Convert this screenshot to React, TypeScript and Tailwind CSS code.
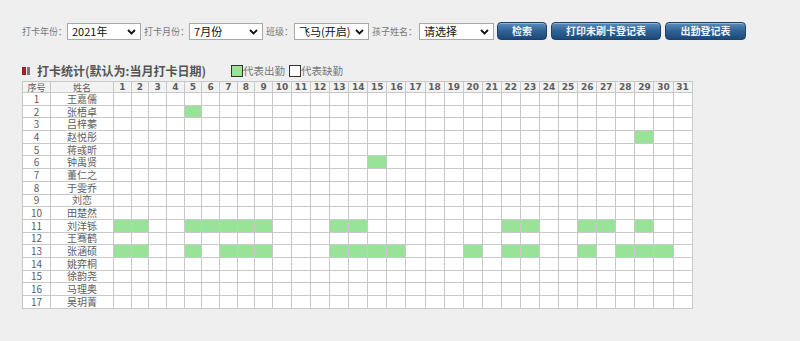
import React from "react";

const students = [
  "王嘉儒",
  "张梧卓",
  "吕梓蓁",
  "赵悦彤",
  "蒋彧昕",
  "钟禹贤",
  "董仁之",
  "于雯乔",
  "刘恋",
  "田楚然",
  "刘洋铄",
  "王骞鹤",
  "张涵硕",
  "姚弈桐",
  "徐韵尧",
  "马理奥",
  "吴玥菁",
];

// days with attendance, per student row (1-based)
const present: Record<number, number[]> = {
  2: [5],
  4: [29],
  6: [15],
  11: [1, 2, 5, 6, 7, 8, 9, 13, 14, 22, 23, 26, 27, 29],
  13: [1, 2, 5, 7, 8, 9, 13, 14, 15, 16, 20, 22, 23, 26, 28, 29, 30],
};

const days = Array.from({ length: 31 }, (_, i) => i + 1);

function Chevron() {
  return (
    <svg
      width="9"
      height="6"
      viewBox="0 0 9 6"
      className="absolute right-[5px] top-[6px] pointer-events-none"
    >
      <path
        d="M1 1l3.5 3.5L8 1"
        fill="none"
        stroke="#111"
        strokeWidth="1.8"
      />
    </svg>
  );
}

function Select({ value, width }: { value: string; width: string }) {
  return (
    <div className={`relative h-[17px] shrink-0 ${width}`}>
      <select
        defaultValue={value}
        className="block appearance-none w-full h-[17px] bg-white border border-[#a8a8a8] pl-[4px] py-0 text-[11px] leading-[15px] text-[#111] outline-none"
      >
        <option>{value}</option>
      </select>
      <Chevron />
    </div>
  );
}

function Label({ text }: { text: string }) {
  return (
    <span className="block text-[9px] leading-[17px] text-[#777] whitespace-nowrap">
      {text}
    </span>
  );
}

function Button({ text, width }: { text: string; width: string }) {
  return (
    <button
      className={`block h-[18px] ${width} rounded-[4px] border border-[#1f4266] bg-gradient-to-b from-[#5b8dbd] via-[#2f6396] to-[#1c4a78] text-[#eef4fa] text-[10px] font-bold leading-none shadow-[inset_0_1px_0_rgba(255,255,255,0.35)]`}
    >
      {text}
    </button>
  );
}

export default function App() {
  return (
    <div className="w-[800px] h-[341px] bg-[#efefef] overflow-hidden font-['Noto_Sans_CJK_SC','Noto_Sans',sans-serif]">

      {/* Toolbar */}
      <div className="flex items-center pl-[22px] mt-[22px] h-[18px]">
        <Label text="打卡年份：" />
        <Select value="2021年" width="w-[74px]" />

        <div className="ml-[3px]">
          <Label text="打卡月份：" />
        </div>
        <Select value="7月份" width="w-[74px]" />

        <div className="ml-[3px]">
          <Label text="班级：" />
        </div>
        <div className="ml-[1px]">
          <Select value="飞马(开启)" width="w-[75px]" />
        </div>

        <div className="ml-[3px]">
          <Label text="孩子姓名：" />
        </div>
        <div className="ml-[2px]">
          <Select value="请选择" width="w-[75px]" />
        </div>

        <div className="ml-[3px] flex gap-[4px]">
          <Button text="检索" width="w-[50px]" />
          <Button text="打印未刷卡登记表" width="w-[110px]" />
          <Button text="出勤登记表" width="w-[81px]" />
        </div>
      </div>

      {/* Title + legend */}
      <div className="flex items-center pl-[22px] mt-[24px] h-[14px]">
        <span className="w-[4px] h-[8px] bg-[#a61d24]" />
        <span className="w-[3px] h-[8px] ml-[1px] bg-[#7a7a7a]" />
        <span className="ml-[7px] text-[12px] font-bold text-[#555] leading-none whitespace-nowrap">
          打卡统计(默认为:当月打卡日期)
        </span>

        <span className="ml-[25px] w-[12px] h-[12px] border border-[#333] bg-[#98e398]" />
        <span className="text-[10.5px] text-[#777] leading-none">代表出勤</span>
        <span className="ml-[4px] w-[12px] h-[12px] border border-[#333] bg-white" />
        <span className="text-[10.5px] text-[#777] leading-none">代表缺勤</span>
      </div>

      {/* Table */}
      <table className="ml-[22px] mt-[3px] w-[670px] table-fixed border-collapse bg-white text-[#5e5e5e]">
        <colgroup>
          <col className="w-[28px]" />
          <col className="w-[63px]" />
          {days.map((d) => (
            <col
              key={d}
              className={d < 10 ? "w-[17.67px]" : "w-[19.08px]"}
            />
          ))}
        </colgroup>

        <thead>
          <tr className="h-[11px] bg-[#f3f3f3]">
            <th className="border border-[#c8c8c8] p-0 text-[9px] font-normal leading-none">
              序号
            </th>
            <th className="border border-[#c8c8c8] p-0 text-[9px] font-normal leading-none">
              姓名
            </th>
            {days.map((d) => (
              <th
                key={d}
                className="border border-[#c8c8c8] p-0 text-[9px] font-bold leading-none font-['DejaVu_Sans',sans-serif]"
              >
                {d}
              </th>
            ))}
          </tr>
        </thead>

        <tbody>
          {students.map((name, idx) => {
            const row = idx + 1;
            const on = present[row] || [];

            return (
              <tr key={row} className="h-[12.7px]">
                <td className="border border-[#c8c8c8] p-0 text-center text-[10px] leading-none">
                  {row}
                </td>
                <td className="border border-[#c8c8c8] p-0 text-center text-[10px] leading-none">
                  {name}
                </td>
                {days.map((d) => (
                  <td
                    key={d}
                    className={`border border-[#c8c8c8] p-0 ${
                      on.includes(d) ? "bg-[#98e398]" : ""
                    }`}
                  />
                ))}
              </tr>
            );
          })}
        </tbody>
      </table>
    </div>
  );
}
